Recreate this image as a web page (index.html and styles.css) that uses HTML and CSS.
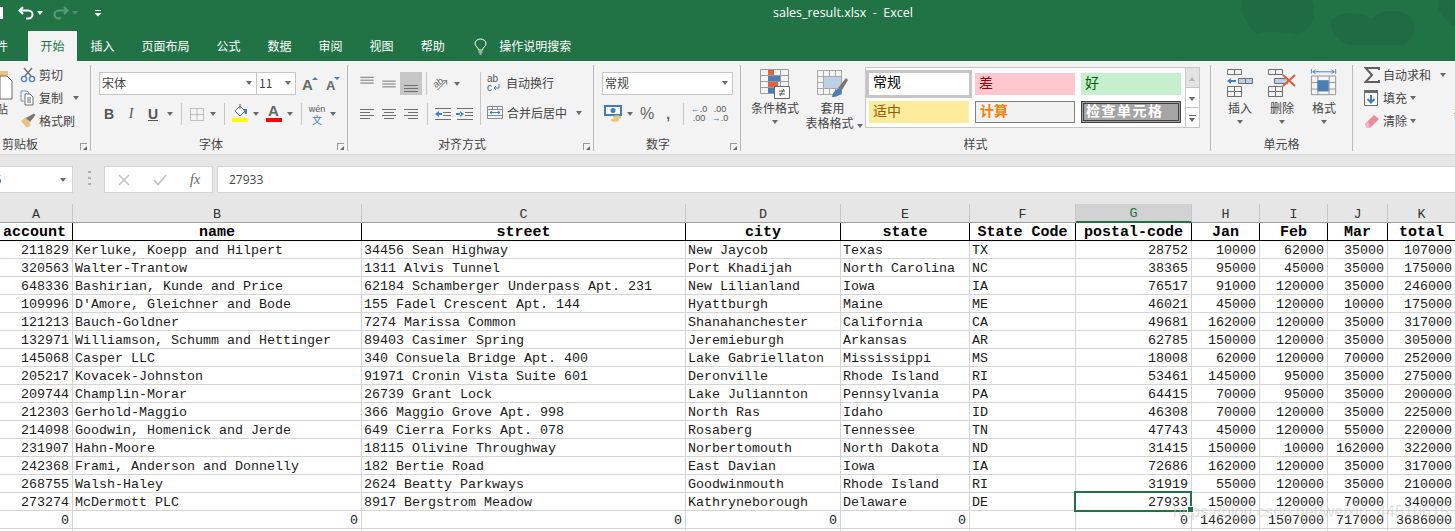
FILE: index.html
```html
<!DOCTYPE html>
<html lang="zh-CN">
<head>
<meta charset="utf-8">
<title>sales_result.xlsx - Excel</title>
<link rel="stylesheet" href="styles.css">
</head>
<body>
<header class="head">
  <svg class="blobs" width="215" height="61" viewBox="0 0 215 61"><path d="M2 0 L72 0 C78 12 72 30 58 35 C44 32 30 30 16 34 C8 24 -2 12 2 0Z M92 20 C104 8 122 14 132 18 C142 8 170 8 174 24 C176 34 170 40 164 45 L108 45 C98 40 88 30 92 20Z M198 0 L215 0 L215 26 C205 22 196 10 198 0Z" fill="#1f6c42"/></svg>
  <div class="titlebar">
    <div class="qat">
      <span class="save"></span>
      <svg class="undo" width="16" height="14" viewBox="0 0 16 14"><path d="M5 1 L1.5 4.5 L5 8 M2 4.5 H10 C13 4.5 14.5 6.5 14.5 8.5 C14.5 10.5 13 12.5 10 12.5 H8" fill="none" stroke="#fff" stroke-width="2"/></svg>
      <i class="dd white"></i>
      <svg class="redo" width="16" height="14" viewBox="0 0 16 14"><path d="M11 1 L14.5 4.5 L11 8 M14 4.5 H6 C3 4.5 1.5 6.5 1.5 8.5 C1.5 10.5 3 12.5 6 12.5 H8" fill="none" stroke="#5b9a78" stroke-width="2"/></svg>
      <i class="dd faint"></i>
      <svg class="custom" width="8" height="8" viewBox="0 0 8 8"><path d="M1 1H7V2H1Z M0.5 4H7.5L4 7.5Z" fill="#fff"/></svg>
    </div>
    <div class="doc-title">sales_result.xlsx  -  Excel</div>
  </div>
  <nav class="tabs">
    <span class="tab file">文件</span>
    <span class="tab active">开始</span>
    <span class="tab">插入</span>
    <span class="tab">页面布局</span>
    <span class="tab">公式</span>
    <span class="tab">数据</span>
    <span class="tab">审阅</span>
    <span class="tab">视图</span>
    <span class="tab">帮助</span>
    <svg class="bulb" width="13" height="17" viewBox="0 0 13 17"><path d="M4.5 12 C4.5 9.5 1 8.5 1 5.5 C1 3 3.5 1 6.5 1 C9.5 1 12 3 12 5.5 C12 8.5 8.5 9.5 8.5 12Z M4.5 14H8.5 M5.5 16H7.5" fill="none" stroke="#fff"/></svg>
    <span class="search">操作说明搜索</span>
  </nav>
</header>

<section class="ribbon">
  <div class="group g-clip">
    <div class="g-body">
      <div class="paste">
        <svg width="14" height="30" viewBox="0 0 14 30"><path d="M0 0H8V5H0Z" fill="#e8c57e"/><path d="M0 5H7L12 10V28H0Z" fill="#fff" stroke="#6a6a6a"/></svg>
        <span class="paste-text">粘贴</span>
      </div>
      <div class="stack">
        <div class="line"><svg width="16" height="16" viewBox="0 0 16 16"><path d="M4 1 L11 9 M12 1 L5 9" stroke="#707070" stroke-width="1.4" fill="none"/><circle cx="4" cy="12" r="2.6" fill="none" stroke="#4a7eb5" stroke-width="1.3"/><circle cx="12" cy="12" r="2.6" fill="none" stroke="#4a7eb5" stroke-width="1.3"/></svg><span>剪切</span></div>
        <div class="line"><svg width="16" height="16" viewBox="0 0 16 16"><path d="M1 1H7L9 3V4 M1 1V11H4" fill="none" stroke="#6b8fb5"/><path d="M5 4H10L13 7V15H5Z" fill="#fff" stroke="#6a6a6a"/><path d="M7 8H11M7 10H11M7 12H11" stroke="#6a6a6a"/></svg><span>复制</span><i class="dd push"></i></div>
        <div class="line"><svg width="16" height="16" viewBox="0 0 16 16"><path d="M1 8 L6 4 L11 12 L7 15Z" fill="#e8c080"/><path d="M6 5 L14 0.5 L15.5 2 L10 9Z" fill="#777"/></svg><span>格式刷</span></div>
      </div>
    </div>
    <div class="g-label left">剪贴板</div>
    <i class="launch"></i>
  </div>

  <div class="group g-font">
    <div class="g-body col">
      <div class="row1">
        <div class="select font"><span>宋体</span><i class="dd"></i></div>
        <div class="select size"><span>11</span><i class="dd"></i></div>
        <svg class="a-grow" width="16" height="18" viewBox="0 0 16 18"><text x="0" y="15" class="a-big">A</text><path d="M10 5 L13 2 L16 5Z" fill="#4a7eb5"/></svg>
        <svg class="a-shrink" width="16" height="18" viewBox="0 0 16 18"><text x="1" y="15" class="a-small">A</text><path d="M9 2 L15 2 L12 5Z" fill="#4a7eb5"/></svg>
      </div>
      <div class="row2">
        <span class="t22 b">B</span><span class="t22 it">I</span><span class="t22 u">U</span><i class="t12 dd"></i><i class="sep"></i>
        <svg class="t20" width="20" height="16" viewBox="0 0 20 16"><path d="M3.5 2.5H16.5V14.5H3.5Z M3.5 8.5H16.5 M10 2.5V14.5" fill="none" stroke="#8a8a8a" stroke-dasharray="1 1"/></svg><i class="t12 dd"></i><i class="sep"></i>
        <svg class="t20" width="20" height="22" viewBox="0 0 20 22"><path d="M5 8 L10 3 L15 8 L10 13Z" fill="#fff" stroke="#666"/><path d="M10 1V6" stroke="#666"/><path d="M13 6H17V11H15Z" fill="#4a7eb5"/><path d="M2 15H18V19H2Z" fill="#ffff00"/></svg><i class="t12 dd"></i>
        <svg class="t20 mg2" width="20" height="22" viewBox="0 0 20 22"><text x="4" y="13" class="a-small wide">A</text><path d="M2 15H18V19H2Z" fill="#ff0000"/></svg><i class="t12 dd"></i><i class="sep"></i>
        <span class="t20 wen"><small>wén</small><b>文</b></span><i class="t12 dd"></i>
      </div>
    </div>
    <div class="g-label">字体</div>
    <i class="launch"></i>
  </div>

  <div class="group g-align">
    <div class="g-body split">
      <div class="col a-left">
        <div class="row1 tight">
          <svg class="t22" width="22" height="23" viewBox="0 0 22 23"><path d="M4 4.5H18M4 7.5H18M4 10.5H18" stroke="#6f6f6f"/></svg>
          <svg class="t22" width="22" height="23" viewBox="0 0 22 23"><path d="M4 8.5H18M4 11.5H18M4 14.5H18" stroke="#6f6f6f"/></svg>
          <svg class="t22 on" width="22" height="23" viewBox="0 0 22 23"><path d="M4 13.5H18M4 16.5H18M4 19.5H18" stroke="#6f6f6f"/></svg>
          <i class="sep short"></i>
          <svg class="t20" width="20" height="23" viewBox="0 0 20 23"><text x="2" y="13" class="tiny" transform="rotate(-35 8 11)">ab</text><path d="M6 18 L16 8 M12 8H16V12" fill="none" stroke="#6f6f6f"/></svg><i class="t12 dd"></i>
        </div>
        <div class="row2">
          <svg class="t22" width="22" height="22" viewBox="0 0 22 22"><path d="M4 6.5H18M4 9.5H14M4 12.5H18M4 15.5H14" stroke="#6f6f6f"/></svg>
          <svg class="t22" width="22" height="22" viewBox="0 0 22 22"><path d="M4 6.5H18M6 9.5H16M4 12.5H18M6 15.5H16" stroke="#6f6f6f"/></svg>
          <svg class="t22" width="22" height="22" viewBox="0 0 22 22"><path d="M4 6.5H18M8 9.5H18M4 12.5H18M8 15.5H18" stroke="#6f6f6f"/></svg>
          <i class="sep"></i>
          <svg class="t20" width="20" height="22" viewBox="0 0 20 22"><path d="M2 5.5H18M10 9.5H18M10 12.5H18M2 16.5H18" stroke="#6f6f6f"/><path d="M2 11 L6 8V14Z M5 10H9V12H5Z" fill="#3f7fc0"/></svg>
          <svg class="t20 mg2" width="20" height="22" viewBox="0 0 20 22"><path d="M2 5.5H18M10 9.5H18M10 12.5H18M2 16.5H18" stroke="#6f6f6f"/><path d="M9 11 L5 8V14Z M1 10H6V12H1Z" fill="#3f7fc0"/></svg>
        </div>
      </div>
      <i class="sep tall"></i>
      <div class="col a-right">
        <div class="wide-btn first">
          <span class="abc">ab<br>c<svg width="8" height="7" viewBox="0 0 8 7"><path d="M7 0V4H2M4 2L2 4L4 6" fill="none" stroke="#3f7fc0"/></svg></span><span>自动换行</span>
        </div>
        <div class="wide-btn">
          <svg width="16" height="14" viewBox="0 0 16 14"><path d="M0.5 0.5H15.5V12.5H0.5Z M0.5 3.5H15.5M5.5 .5V3.5M10.5 .5V3.5M0.5 9.5H15.5" fill="none" stroke="#8a8a8a"/><path d="M3 6.5H13M3 6.5L5 5M3 6.5L5 8M13 6.5L11 5M13 6.5L11 8" fill="none" stroke="#3f7fc0"/></svg><span class="merge">合并后居中</span><i class="dd"></i>
        </div>
      </div>
    </div>
    <div class="g-label">对齐方式</div>
    <i class="launch"></i>
  </div>

  <div class="group g-num">
    <div class="g-body col">
      <div class="row1">
        <div class="select num"><span>常规</span><i class="dd"></i></div>
      </div>
      <div class="row2">
        <svg class="t22" width="22" height="20" viewBox="0 0 22 20"><path d="M3 2H19V11H3Z" fill="#fff" stroke="#3f7fc0" stroke-width="2"/><circle cx="11" cy="6.500" r="2.5" fill="#3f7fc0"/><ellipse cx="15" cy="13" rx="4" ry="1.8" fill="#efc56f"/><ellipse cx="13" cy="16" rx="4" ry="1.8" fill="#efc56f"/></svg><i class="t12 dd"></i>
        <span class="t22 pct">%</span><span class="t20 comma">,</span><i class="sep"></i>
        <span class="t20 dec"><em><u>←</u>.0</em><em>.00</em></span>
        <span class="t22 dec"><em>.00</em><em><u>→</u>.0</em></span>
      </div>
    </div>
    <div class="g-label">数字</div>
    <i class="launch"></i>
  </div>

  <div class="group g-style">
    <div class="g-body flat">
      <div class="big b1">
        <svg width="30" height="30" viewBox="0 0 30 30"><path d="M.5 .5H28.5V24.5H.5Z M.5 6.5H28.5M.5 12.5H28.5M.5 18.5H28.5M8.5 .5V24.5M20.5 .5V24.5" fill="none" stroke="#9a9a9a"/><path d="M8 1H14V6H8Z M8 13H18V18H8Z" fill="#e0603f"/><path d="M8 7H20V12H8Z M8 19H14V24H8Z" fill="#4a7eb5"/><path d="M14.5 17.5H29.5V29.5H14.5Z" fill="#fff" stroke="#6a6a6a"/><path d="M19 22H25M19 25H25M24 20L20 27" stroke="#555" fill="none"/></svg>
        <span>条件格式</span><i class="dd"></i>
      </div>
      <div class="big b2">
        <svg width="32" height="28" viewBox="0 0 32 28"><path d="M.5 .5H24.5V24.5H.5Z M.5 6.5H24.5M.5 12.5H24.5M.5 18.5H24.5M6.5 .5V24.5M12.5 .5V24.5M18.5 .5V24.5" fill="none" stroke="#a8a8a8"/><path d="M7 7H24V18H7Z" fill="#bcd0e6"/><path d="M21 18 L29 8 L31 10 L25 20Z" fill="#777"/><path d="M15 27 C16 21 20 18 24 19 L25 22 C23 26 19 27 15 27Z" fill="#4a7eb5"/></svg>
        <span>套用</span><span class="nowrap">表格格式<i class="dd inline"></i></span>
      </div>
      <div class="gallery">
        <div class="cells">
          <span class="sty normal">常规</span><span class="sty bad">差</span><span class="sty good">好</span>
          <span class="sty mid">适中</span><span class="sty calc">计算</span><span class="sty check">检查单元格</span>
        </div>
        <div class="scroll">
          <span class="up"><i></i></span><span class="down"><i></i></span><span class="more"><i></i></span>
        </div>
      </div>
    </div>
    <div class="g-label">样式</div>
  </div>

  <div class="group g-cells">
    <div class="g-body flat">
      <div class="big c">
        <svg width="28" height="28" viewBox="0 0 28 28"><path d="M1.5 .5H15.5V5.5H1.5Z M8.5 .5V5.5 M1.5 17.5H15.5V27.5H1.5Z M8.5 17.500V27.5 M1.5 22.5H15.5" fill="none" stroke="#6f6f6f"/><path d="M12.5 9.5H26.5V14.5H12.5Z M19.5 9.5V14.5" fill="#bcd0e6" stroke="#6f6f6f"/><path d="M1 12 L5 9V15Z M4 11H10V13H4Z" fill="#3f7fc0"/></svg>
        <span>插入</span><i class="dd"></i>
      </div>
      <div class="big c">
        <svg width="30" height="28" viewBox="0 0 30 28"><path d="M1.5 .5H15.5V5.5H1.5Z M8.5 .5V5.5 M1.5 17.5H15.5V27.5H1.5Z M8.5 17.5V27.5 M1.5 22.5H15.5" fill="none" stroke="#6f6f6f"/><path d="M7.5 9.5H20.5V14.5H7.5Z" fill="#bcd0e6" stroke="#6f6f6f"/><path d="M16 6 L28 17 M28 6 L16 17" stroke="#e0603f" stroke-width="2.2"/></svg>
        <span>删除</span><i class="dd"></i>
      </div>
      <div class="big c">
        <svg width="30" height="30" viewBox="0 0 30 30"><path d="M1.5 0V5 M27.5 0V5 M3 3H26 M3 3L6 1M3 3L6 5M26 3L23 1M26 3L23 5" fill="none" stroke="#3f7fc0"/><path d="M1.5 7.5H27.5V27.5H1.5Z M1.5 14.5H27.5M1.5 21.5H27.5M8.5 7.5V27.5M20.5 7.5V27.5" fill="none" stroke="#8f8f8f"/><path d="M8 12H20V24H8Z" fill="#4a7eb5"/></svg>
        <span>格式</span><i class="dd"></i>
      </div>
    </div>
    <div class="g-label">单元格</div>
  </div>

  <div class="group g-edit">
    <div class="stack">
      <div class="line"><svg width="16" height="16" viewBox="0 0 16 16"><path d="M15 3V1H1.5L8 8L1.5 15H15V13" fill="none" stroke="#5f5f5f" stroke-width="2"/></svg><span>自动求和</span><i class="dd far"></i></div>
      <div class="line"><svg width="16" height="16" viewBox="0 0 16 16"><path d="M.5 .5H13.5V15.5H.5Z" fill="#fff" stroke="#6a6a6a"/><path d="M0 0H14V3H0Z" fill="#6a6a6a"/><path d="M7 5V12M3.5 9L7 12.5L10.5 9" fill="none" stroke="#3f7fc0" stroke-width="2"/></svg><span>填充</span><i class="dd near"></i></div>
      <div class="line"><svg width="16" height="16" viewBox="0 0 16 16"><path d="M1 11 L10 2 L15 6 L6 15 L3 15Z" fill="#ea8a9c"/><path d="M1 11L3 15H6L4 8Z" fill="#f2b5c0"/></svg><span>清除</span><i class="dd near"></i></div>
    </div>
  </div>
  <div class="sort">排序</div>
</section>

<section class="formula">
  <div class="namebox"><span>G16</span><i class="dd"></i></div>
  <div class="dots"></div>
  <div class="fx-box">
    <svg width="12" height="12" viewBox="0 0 12 12"><path d="M1 1L11 11M11 1L1 11" stroke="#c4c4c4" stroke-width="1.6"/></svg>
    <svg width="14" height="12" viewBox="0 0 14 12"><path d="M1 6L5 10.5L13 1" fill="none" stroke="#c4c4c4" stroke-width="1.8"/></svg>
    <span class="fx">fx</span>
  </div>
  <div class="input">27933</div>
</section>

<main class="sheet">
  <table>
    <colgroup><col class="ca"><col class="cb"><col class="cc"><col class="cd"><col class="ce"><col class="cf"><col class="cg"><col class="ch"><col class="ci"><col class="cj"><col class="ck"></colgroup>
    <thead>
      <tr class="letters"><th>A</th><th>B</th><th>C</th><th>D</th><th>E</th><th>F</th><th class="cur">G</th><th>H</th><th>I</th><th>J</th><th>K</th></tr>
    </thead>
    <tbody>
      <tr class="hdr"><td>account</td><td>name</td><td>street</td><td>city</td><td>state</td><td>State Code</td><td>postal-code</td><td>Jan</td><td>Feb</td><td>Mar</td><td>total</td></tr>
      <tr><td>211829</td><td>Kerluke, Koepp and Hilpert</td><td>34456 Sean Highway</td><td>New Jaycob</td><td>Texas</td><td>TX</td><td>28752</td><td>10000</td><td>62000</td><td>35000</td><td>107000</td></tr>
      <tr><td>320563</td><td>Walter-Trantow</td><td>1311 Alvis Tunnel</td><td>Port Khadijah</td><td>North Carolina</td><td>NC</td><td>38365</td><td>95000</td><td>45000</td><td>35000</td><td>175000</td></tr>
      <tr><td>648336</td><td>Bashirian, Kunde and Price</td><td>62184 Schamberger Underpass Apt. 231</td><td>New Lilianland</td><td>Iowa</td><td>IA</td><td>76517</td><td>91000</td><td>120000</td><td>35000</td><td>246000</td></tr>
      <tr><td>109996</td><td>D'Amore, Gleichner and Bode</td><td>155 Fadel Crescent Apt. 144</td><td>Hyattburgh</td><td>Maine</td><td>ME</td><td>46021</td><td>45000</td><td>120000</td><td>10000</td><td>175000</td></tr>
      <tr><td>121213</td><td>Bauch-Goldner</td><td>7274 Marissa Common</td><td>Shanahanchester</td><td>California</td><td>CA</td><td>49681</td><td>162000</td><td>120000</td><td>35000</td><td>317000</td></tr>
      <tr><td>132971</td><td>Williamson, Schumm and Hettinger</td><td>89403 Casimer Spring</td><td>Jeremieburgh</td><td>Arkansas</td><td>AR</td><td>62785</td><td>150000</td><td>120000</td><td>35000</td><td>305000</td></tr>
      <tr><td>145068</td><td>Casper LLC</td><td>340 Consuela Bridge Apt. 400</td><td>Lake Gabriellaton</td><td>Mississippi</td><td>MS</td><td>18008</td><td>62000</td><td>120000</td><td>70000</td><td>252000</td></tr>
      <tr><td>205217</td><td>Kovacek-Johnston</td><td>91971 Cronin Vista Suite 601</td><td>Deronville</td><td>Rhode Island</td><td>RI</td><td>53461</td><td>145000</td><td>95000</td><td>35000</td><td>275000</td></tr>
      <tr><td>209744</td><td>Champlin-Morar</td><td>26739 Grant Lock</td><td>Lake Juliannton</td><td>Pennsylvania</td><td>PA</td><td>64415</td><td>70000</td><td>95000</td><td>35000</td><td>200000</td></tr>
      <tr><td>212303</td><td>Gerhold-Maggio</td><td>366 Maggio Grove Apt. 998</td><td>North Ras</td><td>Idaho</td><td>ID</td><td>46308</td><td>70000</td><td>120000</td><td>35000</td><td>225000</td></tr>
      <tr><td>214098</td><td>Goodwin, Homenick and Jerde</td><td>649 Cierra Forks Apt. 078</td><td>Rosaberg</td><td>Tennessee</td><td>TN</td><td>47743</td><td>45000</td><td>120000</td><td>55000</td><td>220000</td></tr>
      <tr><td>231907</td><td>Hahn-Moore</td><td>18115 Olivine Throughway</td><td>Norbertomouth</td><td>North Dakota</td><td>ND</td><td>31415</td><td>150000</td><td>10000</td><td>162000</td><td>322000</td></tr>
      <tr><td>242368</td><td>Frami, Anderson and Donnelly</td><td>182 Bertie Road</td><td>East Davian</td><td>Iowa</td><td>IA</td><td>72686</td><td>162000</td><td>120000</td><td>35000</td><td>317000</td></tr>
      <tr><td>268755</td><td>Walsh-Haley</td><td>2624 Beatty Parkways</td><td>Goodwinmouth</td><td>Rhode Island</td><td>RI</td><td>31919</td><td>55000</td><td>120000</td><td>35000</td><td>210000</td></tr>
      <tr><td>273274</td><td>McDermott PLC</td><td>8917 Bergstrom Meadow</td><td>Kathryneborough</td><td>Delaware</td><td>DE</td><td class="selected">27933</td><td>150000</td><td>120000</td><td>70000</td><td>340000</td></tr>
      <tr class="sum"><td>0</td><td>0</td><td>0</td><td>0</td><td>0</td><td>&nbsp;</td><td>0</td><td>1462000</td><td>1507000</td><td>717000</td><td>3686000</td></tr>
      <tr><td></td><td></td><td></td><td></td><td></td><td></td><td></td><td></td><td></td><td></td><td></td></tr>
    </tbody>
  </table>
  <div class="watermark">https://blog.csdn.net/weixin_44510615</div>
</main>
</body>
</html>
```
FILE: styles.css
```css
* { box-sizing: border-box; }
html, body { margin: 0; padding: 0; }
body {
  width: 1455px; height: 531px; overflow: hidden; background: #fff;
  font: 12px/16px "Noto Sans CJK SC", "Noto Sans", sans-serif; color: #444;
}
i { font-style: normal; display: block; }

/* caret */
.dd { width: 12px; height: 8px; flex: none; position: relative; }
.dd::after {
  content: ""; position: absolute; left: 3px; top: 2px;
  border: 3px solid transparent; border-top: 4px solid #6a6a6a; border-bottom: 0; border-left-width: 3.5px; border-right-width: 3.5px;
}
.dd.white::after { border-top-color: #fff; }
.dd.faint::after { border-top-color: #4f8f6c; }
.dd.inline { display: inline-block; vertical-align: middle; }

/* title and tabs */
.head { position: relative; height: 61px; background: #217346; color: #fff; overflow: hidden; }
.blobs { position: absolute; left: 1240px; top: 0; }
.titlebar { position: relative; display: flex; height: 31px; align-items: flex-start; }
.qat { width: 773px; display: flex; align-items: center; flex: none; height: 26px; }
.save { width: 3px; height: 12px; background: #fff; margin-right: 15px; }
.qat .dd { width: 12px; margin: 0 7px 0 0; }
.redo { margin-left: 0; }
.custom { margin-left: 6px; }
.doc-title { font: 12.5px/26px "Open Sans", sans-serif; white-space: pre; }
.tabs { position: relative; display: flex; height: 30px; align-items: center; }
.tab { padding: 0 13.5px; line-height: 30px; font-size: 12px; white-space: nowrap; }
.tab.file { margin-left: -16px; padding: 0 20px 0 0; }
.tab.active { background: #f3f3f3; color: #217346; padding: 0 12.5px; }
.bulb { margin-left: 16px; margin-right: 12px; }
.search { font-size: 12px; }

/* ribbon */
.ribbon {
  display: flex; height: 94px; background: #f3f3f3; border-bottom: 1px solid #d6d6d6;
  padding-top: 4px; overflow: hidden;
}
.group { position: relative; flex: none; height: 86px; border-right: 1px solid #b9b9b9; display: flex; flex-direction: column; }
.g-body { height: 71px; flex: none; display: flex; }
.g-body.col, .col { display: flex; flex-direction: column; }
.g-label { height: 15px; line-height: 16px; text-align: center; color: #444; }
.g-label.left { text-align: left; padding-left: 2px; }
.g-font .g-label { padding-right: 23px; }
.g-align .g-label { padding-right: 17px; }
.g-num .g-label { padding-right: 26px; }
.launch { position: absolute; right: 3px; bottom: 1px; width: 7px; height: 7px; border: 1px solid #9a9a9a; border-width: 1px 0 0 1px; }
.launch::after { content: ""; position: absolute; right: 0; bottom: 0; border: 2.5px solid #6a6a6a; border-top-color: transparent; border-left-color: transparent; }
.g-clip { width: 91px; }
.g-font { width: 257px; padding-left: 7px; }
.g-align { width: 246px; }
.g-num { width: 147px; padding-left: 8px; }
.g-style { width: 470px; }
.g-cells { width: 142px; }
.g-edit { width: 101px; border-right: 0; padding-left: 11px; }
.sort { flex: none; margin-top: 39px; height: 16px; white-space: nowrap; }

.paste { width: 20px; flex: none; padding-top: 6px; overflow: hidden; display: flex; flex-direction: column; }
.paste svg { flex: none; display: block; }
.paste-text { margin-left: -4px; width: 12px; white-space: nowrap; line-height: 16px; direction: rtl; }
.stack { display: flex; flex-direction: column; gap: 3px; }
.line { height: 20px; display: flex; align-items: center; gap: 3px; white-space: nowrap; }
.line svg { flex: none; }
.line .push { margin-left: 4px; }
.line .far { margin-left: 3px; }
.line .near { margin-left: -3px; }

.row1 { display: flex; height: 23px; margin-top: 7px; align-items: center; }
.row2 { display: flex; height: 22px; margin-top: 8px; align-items: center; }
.select { height: 23px; background: #fff; border: 1px solid #c6c6c6; display: flex; align-items: center; justify-content: space-between; padding: 0 1px 1px 2px; line-height: 20px; }
.select.font { width: 157px; margin-left: 1px; border-right: 0; }
.select.size { width: 40px; }
.select.num { width: 131px; }
.a-grow { margin-left: 6px; }
.a-shrink { margin-left: 7px; }
.a-big { font: bold 15px "Liberation Sans", sans-serif; fill: #666; }
.a-small { font: bold 13px "Liberation Sans", sans-serif; fill: #666; }
.a-small.wide { font-size: 15px; }
.tiny { font: 10px "Liberation Sans", sans-serif; fill: #666; }

.t22, .t20, .t12 { flex: none; display: flex; align-items: center; justify-content: center; height: 22px; }
.t22 { width: 22px; }
.t20 { width: 20px; }
.t12 { width: 12px; height: 8px; }
.mg2 { margin-left: 2px; }
.sep { flex: none; width: 1px; height: 22px; background: #c6c6c6; margin: 0 5px; }
.sep.short { margin: 0 4px; height: 23px; }
.sep.tall { height: 53px; margin: 7px 0 0 0; }
.b, .it, .u { font: bold 14px/22px "Liberation Sans", sans-serif; color: #555; }
.it { font-style: italic; font-weight: normal; font-family: "Liberation Serif", serif; }
.u { text-decoration: underline; }
.wen { flex-direction: column; line-height: 9px; }
.wen small { font: 9px/10px "Liberation Sans", sans-serif; color: #555; }
.wen b { font-size: 10px; line-height: 11px; font-weight: normal; color: #3f7fc0; }

.split { display: flex; }
.a-left { width: 132px; padding-left: 8px; flex: none; }
.on { background: #c6c6c6; height: 23px; }
.a-right { padding-left: 6px; }
.wide-btn { display: flex; align-items: center; gap: 4px; height: 22px; margin-top: 8px; white-space: nowrap; }
.wide-btn.first { margin-top: 6px; height: 23px; gap: 6px; }
.abc { font: 10px/9px "Liberation Sans", sans-serif; color: #555; width: 13px; }
.merge { margin-right: 2px; }

.pct { font: 16px/22px "Liberation Sans", sans-serif; color: #666; }
.comma { font: bold 15px/18px "Liberation Sans", sans-serif; color: #666; }
.dec { flex-direction: column; font: 9px/9px "Liberation Sans", sans-serif; color: #555; }
.dec em { font-style: normal; display: block; white-space: nowrap; }
.dec u { text-decoration: none; color: #3f7fc0; font-weight: bold; }

.flat { display: flex; }
.big { flex: none; display: flex; flex-direction: column; align-items: center; padding-top: 4px; line-height: 15px; }
.big svg { height: 30px; flex: none; margin-bottom: 1px; }
.big .dd { margin-top: 3px; }
.b1 { width: 56px; margin-left: 6px; }
.b2 { width: 59px; }
.nowrap { white-space: nowrap; padding-left: 6px; }
.gallery { flex: none; margin: 2px 0 0 3px; width: 335px; height: 61px; border: 1px solid #c6c6c6; background: #fff; display: flex; }
.cells { width: 319px; padding: 5px 0 0 3px; display: grid; grid-template-columns: repeat(3, 100px); grid-auto-rows: 22px; column-gap: 6px; row-gap: 6px; }
.sty { font-size: 14px; line-height: 18px; padding-left: 4px; color: #000; white-space: nowrap; }
.normal { outline: 3px solid #c6c6c6; line-height: 16px; }
.bad { background: #ffc7ce; color: #9c0006; }
.good { background: #c6efce; color: #006100; }
.mid { background: #ffeb9c; color: #9c5700; }
.calc { background: #f2f2f2; color: #fa7d00; border: 1px solid #7f7f7f; font-weight: bold; line-height: 16px; }
.check { background: #a5a5a5; color: #fff; border: 3px double #3f3f3f; font-size: 14px; font-weight: bold; line-height: 13px; letter-spacing: 1.5px; padding-left: 2px; }
.scroll { flex: none; width: 14px; display: flex; flex-direction: column; border-left: 1px solid #c6c6c6; }
.scroll span { flex: 1; position: relative; border-bottom: 1px solid #c6c6c6; }
.scroll span:last-child { border-bottom: 0; }
.scroll .up { background: #e3e3e3; }
.scroll i { position: absolute; left: 3px; top: 9px; border: 3.5px solid transparent; border-top: 4px solid #666; border-bottom: 0; }
.scroll .up i { border-top: 0; border-bottom: 4px solid #b5b5b5; }
.scroll .more i { top: 10px; }
.scroll .more::before { content: ""; position: absolute; left: 3px; top: 7px; width: 7px; height: 1px; background: #666; }
.g-cells .flat { padding-left: 8px; }
.c { width: 42px; }
.c svg { height: 28px; margin-bottom: 3px; }

/* formula bar */
.formula { display: flex; height: 49px; background: #e6e6e6; padding-top: 11px; }
.namebox, .fx-box, .input { height: 27px; background: #fff; border: 1px solid #d4d4d4; display: flex; align-items: center; }
.namebox { width: 74px; margin-left: -1px; border-left: 0; justify-content: space-between; padding-right: 3px; overflow: hidden; flex: none; }
.namebox span { margin-left: -20px; font: 12px "Open Sans", sans-serif; }
.dots { width: 3px; height: 15px; margin: 5px 13px 0 15px; background: repeating-linear-gradient(#b0b0b0 0 2px, transparent 2px 6px); flex: none; }
.fx-box { width: 109px; padding-left: 13px; flex: none; }
.fx-box svg:nth-child(2) { margin-left: 23px; }
.fx { margin-left: 23px; font: italic 14px "Liberation Serif", serif; color: #666; }
.input { flex: 1; margin-left: 4px; padding-left: 11px; border-right: 0; font: 12px "Open Sans", sans-serif; color: #444; }

/* sheet */
.sheet { position: relative; height: 327px; overflow: hidden; }
table { border-collapse: separate; border-spacing: 0; table-layout: fixed; width: 1456px; font: 13.33px/15px "Liberation Mono", monospace; color: #1a1a1a; }
.ca { width: 73px; } .cb { width: 289px; } .cc { width: 324px; } .cd { width: 155px; } .ce { width: 129px; }
.cf { width: 106px; } .cg { width: 116px; } .ch { width: 68px; } .ci { width: 68px; } .cj { width: 60px; } .ck { width: 68px; }
td, th { height: 18px; padding: 2px 2px 0; border-right: 1px solid #d4d4d4; border-bottom: 1px solid #d4d4d4; overflow: hidden; white-space: nowrap; text-align: left; font-weight: normal; }
tr { height: 18px; }
.letters th { background: #e6e6e6; text-align: center; color: #333; border-right: 1px solid #c6c6c6; border-bottom: 1px solid #9f9f9f; line-height: 14px; padding-top: 3px; }
.letters th.cur { background: #d2d2d2; color: #217346; border-bottom: 2px solid #217346; }
td:nth-child(1), td:nth-child(n+7) { text-align: right; padding-right: 3px; }
.hdr td { font-size: 15px; font-weight: bold; text-align: center; color: #000; border-right-color: #000; border-bottom-color: #000; padding: 2px 0 0; }
.hdr td:first-child { text-align: right; padding-right: 6px; }
.sum td { text-align: right; padding-right: 3px; }
td.selected { position: relative; overflow: visible; }
td.selected::after { content: ""; position: absolute; left: -2px; top: -2px; right: -1px; bottom: -2px; border: 2px solid #217346; }
td.selected::before { content: ""; position: absolute; right: -3px; bottom: -3px; width: 5px; height: 5px; background: #217346; border: 1px solid #fff; z-index: 1; }
.watermark { position: absolute; left: 1173px; top: 298px; font: 16px/20px "Liberation Sans", sans-serif; letter-spacing: .1px; color: rgba(195, 195, 195, .5); white-space: nowrap; }
```
